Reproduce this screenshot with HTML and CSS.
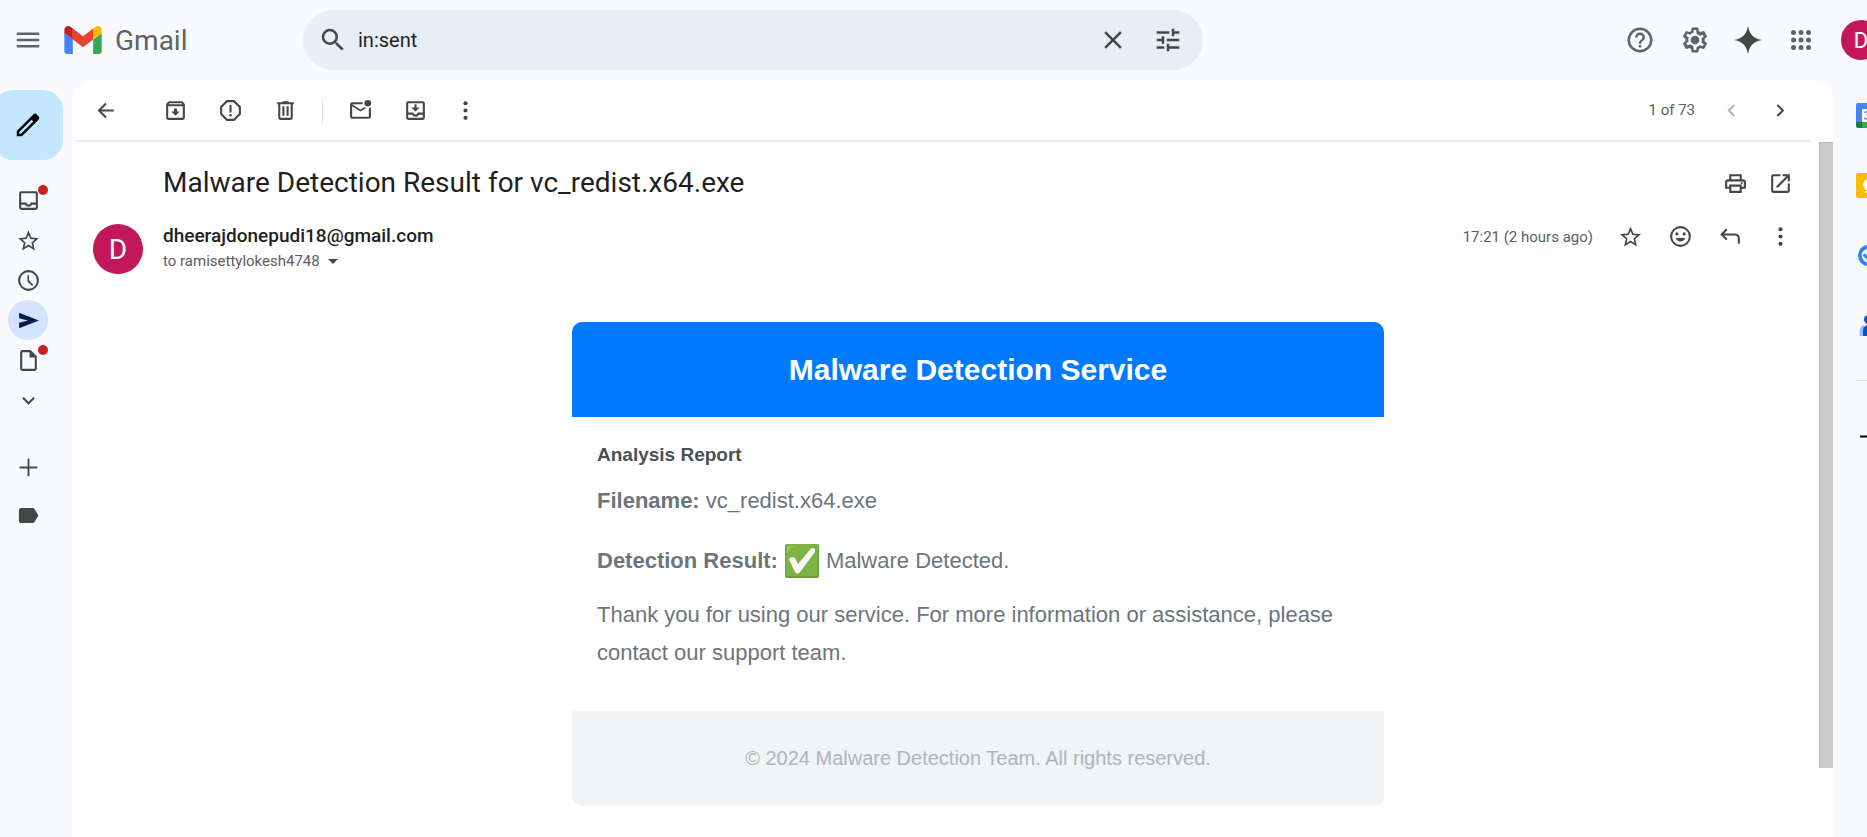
FILE: index.html
```html
<!DOCTYPE html>
<html lang="en">
<head>
<meta charset="utf-8">
<title>Malware Detection Result for vc_redist.x64.exe - Gmail</title>
<link rel="stylesheet" href="styles.css">
</head>
<body>
<header class="topbar">
  <button class="icon-btn soft" aria-label="Main menu"><svg class="icon-lg" viewBox="0 0 24 24"><path d="M3 18h18v-2H3zm0-5h18v-2H3zm0-7v2h18V6z"/></svg></button>
  <a class="brand" href="#" aria-label="Gmail home">
    <svg class="logo" viewBox="52 42 88 66">
      <path fill="#4285f4" d="M58 108h14V74L52 59v43c0 3.32 2.69 6 6 6"/>
      <path fill="#34a853" d="M120 108h14c3.32 0 6-2.69 6-6V59l-20 15"/>
      <path fill="#fbbc04" d="M120 48v26l20-15v-8c0-7.42-8.47-11.65-14.4-7.2"/>
      <path fill="#ea4335" d="M72 74V48l24 18 24-18v26L96 92"/>
      <path fill="#c5221f" d="M52 51v8l20 15V48l-5.6-4.2c-5.94-4.45-14.4-.22-14.4 7.2"/>
    </svg>
    <span>Gmail</span>
  </a>
  <form class="search">
    <button class="icon-btn" type="button" aria-label="Search"><svg class="icon-lg" viewBox="0 0 24 24"><path d="M15.5 14h-.79l-.28-.27A6.47 6.47 0 0 0 16 9.500 6.500 6.500 0 1 0 9.500 16c1.610 0 3.090-.59 4.230-1.570l.27.280v.79l5 4.990L20.490 19zm-6 0a4.500 4.500 0 1 1 0-9 4.500 4.500 0 0 1 0 9"/></svg></button>
    <input type="text" aria-label="Search mail" value="in:sent">
    <button class="icon-btn" type="button" aria-label="Clear search"><svg class="icon-lg" viewBox="0 0 24 24"><path d="M19 6.410 17.590 5 12 10.590 6.410 5 5 6.410 10.590 12 5 17.590 6.410 19 12 13.410 17.590 19 19 17.590 13.410 12z"/></svg></button>
    <button class="icon-btn" type="button" aria-label="Search options"><svg class="icon-lg" viewBox="0 0 24 24"><path d="M3 17v2h6v-2zM3 5v2h10V5zm10 16v-2h8v-2h-8v-2h-2v6zM7 9v2H3v2h4v2h2V9zm14 4v-2H11v2zm-6-4h2V7h4V5h-4V3h-2z"/></svg></button>
  </form>
  <nav class="top-actions" aria-label="Account tools">
    <button class="icon-btn soft help" aria-label="Support"><svg class="icon-lg" viewBox="0 0 24 24"><path d="M11 18h2v-2h-2zm1-16a10 10 0 1 0 0 20 10 10 0 0 0 0-20m0 18a8 8 0 1 1 0-16 8 8 0 0 1 0 16m0-14a4 4 0 0 0-4 4h2a2 2 0 1 1 4 0c0 2-3 1.750-3 5h2c0-2.250 3-2.500 3-5a4 4 0 0 0-4-4"/></svg></button>
    <button class="icon-btn soft" aria-label="Settings"><svg class="icon-lg" viewBox="0 0 24 24"><path d="M13.850 22h-3.700c-.48 0-.89-.35-.96-.84l-.27-1.890c-.53-.27-1.040-.56-1.530-.9l-1.800.73c-.45.17-.95-.02-1.180-.43l-1.830-3.200c-.24-.45-.14-.96.22-1.250l1.530-1.190c-.02-.34-.04-.67-.04-1.030s.02-.69.04-1.030L2.810 9.780a.96.960 0 0 1-.22-1.250l1.850-3.200c.22-.42.73-.61 1.160-.43l1.810.73c.5-.34 1-.64 1.510-.89l.27-1.910c.07-.47.480-.83.960-.83h3.700c.48 0 .89.350.96.840l.27 1.890c.53.270 1.040.56 1.530.9l1.800-.73c.46-.17.960.02 1.190.43l1.830 3.210c.24.440.14.960-.22 1.240l-1.530 1.190c.3.340.05.680.05 1.030s-.02.690-.05 1.030l1.520 1.190c.37.300.46.810.23 1.240l-1.860 3.220c-.22.410-.73.600-1.160.43l-1.820-.73c-.49.340-1 .64-1.510.89l-.27 1.910c-.7.470-.48.820-.96.820m-2.810-2h1.910l.35-2.270.44-.2c.58-.26 1.180-.61 1.780-1.050l.37-.27 2.130.86.970-1.670-1.830-1.430.06-.45c.04-.36.080-.71.080-1.090s-.03-.74-.08-1.090l-.06-.45 1.830-1.430-.97-1.670-2.130.86-.37-.29a9 9 0 0 0-1.770-1.030l-.44-.2L12.960 4h-1.910l-.35 2.270-.44.200c-.58.250-1.180.600-1.790 1.050l-.37.270-2.120-.85-.97 1.660 1.830 1.430-.06.450a8 8 0 0 0 0 2.180l.06.450-1.830 1.430.97 1.670 2.120-.86.380.290c.58.450 1.150.790 1.760 1.030l.45.200z"/><circle cx="12" cy="12" r="3.500"/></svg></button>
    <button class="icon-btn" aria-label="Try Gemini"><svg class="icon-lg" viewBox="0 0 24 24"><path d="M12 .5c.7 6.300 4.700 10.800 11.500 11.500-6.800.7-10.800 5.200-11.500 11.500C11.300 17.200 7.300 12.700.5 12 7.300 11.300 11.300 6.800 12 .5"/></svg></button>
    <button class="icon-btn soft" aria-label="Google apps"><svg class="icon-lg" viewBox="0 0 24 24"><g><circle cx="6" cy="6" r="2"/><circle cx="12" cy="6" r="2"/><circle cx="18" cy="6" r="2"/><circle cx="6" cy="12" r="2"/><circle cx="12" cy="12" r="2"/><circle cx="18" cy="12" r="2"/><circle cx="6" cy="18" r="2"/><circle cx="12" cy="18" r="2"/><circle cx="18" cy="18" r="2"/></g></svg></button>
    <button class="avatar avatar-sm" aria-label="Google Account">D</button>
  </nav>
</header>
<div class="workspace">
  <nav class="rail" aria-label="Mailboxes">
    <button class="compose" aria-label="Compose"><svg class="icon-lg" viewBox="0 0 24 24"><path d="M20.410 4.940 19.060 3.590a2 2 0 0 0-2.830 0L3 16.820V21h4.180L20.410 7.770a2 2 0 0 0 0-2.830M6.410 19.060 5 19v-1.360l9.820-9.820 1.410 1.410z"/></svg></button>
    <a class="box" href="#" aria-label="Inbox"><svg class="icon" viewBox="0 0 24 24"><path d="M19 3H5a2 2 0 0 0-2 2v14a2 2 0 0 0 2 2h14a2 2 0 0 0 2-2V5a2 2 0 0 0-2-2m0 16H5v-3h3.560a4 4 0 0 0 6.880 0H19zm0-5h-4.990a2 2 0 0 1-4 0H5V5h14z"/></svg><i class="dot"></i></a>
    <a class="box" href="#" aria-label="Starred"><svg class="icon" viewBox="0 0 24 24"><path d="m22 9.740-7.190-.62L12 2.500 9.190 9.130 2 9.740l5.460 4.730-1.640 7.030L12 17.770l6.180 3.730-1.630-7.030zM12 15.900l-3.760 2.270 1-4.280-3.320-2.880 4.380-.38L12 6.600l1.710 4.040 4.380.38-3.320 2.880 1 4.280z"/></svg></a>
    <a class="box" href="#" aria-label="Snoozed"><svg class="icon" viewBox="0 0 24 24"><path d="M12 2a10 10 0 1 0 0 20 10 10 0 0 0 0-20m0 18a8 8 0 1 1 0-16 8 8 0 0 1 0 16m.5-13H11v6l4.500 4.200 1.200-1.200-4.200-4z"/></svg></a>
    <a class="box box-active" href="#" aria-label="Sent"><svg class="icon" viewBox="0 0 24 24"><path d="M3 4.500 22 12 3 19.500v-5.300L11.500 12 3 9.800z"/></svg></a>
    <a class="box" href="#" aria-label="Drafts"><svg class="icon" viewBox="0 0 24 24"><path d="M14 2H6a2 2 0 0 0-2 2v16a2 2 0 0 0 2 2h12a2 2 0 0 0 2-2V8zm4 18H6V4h7v5h5z"/></svg><i class="dot"></i></a>
    <button class="box" aria-label="More"><svg class="icon" viewBox="0 0 24 24"><path d="M16.590 8.590 12 13.170 7.410 8.590 6 10l6 6 6-6z"/></svg></button>
    <div class="labels">
      <button class="box box-tall" aria-label="Create new label"><svg class="icon" viewBox="0 0 24 24"><path d="M20.500 12.900h-7.600v7.600h-1.800v-7.600H3.500v-1.800h7.600V3.500h1.800v7.600h7.600z"/></svg></button>
      <a class="box box-tall" href="#" aria-label="Label"><svg class="icon" viewBox="0 0 24 24"><path d="M17.600 5.500c-.36-.5-.9-.8-1.500-.8H5a2.200 2.200 0 0 0-2.200 2v10.600c0 1.100.9 2 2.200 2h11.100c.6 0 1.140-.3 1.500-.8L21.500 12z"/></svg></a>
    </div>
  </nav>
  <main class="panel">
    <div class="toolbar" role="toolbar" aria-label="Message actions">
      <button class="icon-btn back" aria-label="Back to Sent"><svg class="icon" viewBox="0 0 24 24"><path class="line" d="M11.500 5.200 4.800 12l6.700 6.800M4.800 12H19"/></svg></button>
      <div class="group">
        <button class="icon-btn" aria-label="Archive"><svg class="icon" viewBox="0 0 24 24"><path d="m20.540 5.230-1.390-1.680C18.880 3.210 18.470 3 18 3H6c-.47 0-.88.21-1.160.55L3.460 5.230C3.170 5.570 3 6.020 3 6.500V19a2 2 0 0 0 2 2h14a2 2 0 0 0 2-2V6.500c0-.48-.17-.93-.46-1.270M6.240 5h11.520l.83 1H5.420zM5 19V8h14v11zm8.450-9h-2.900v3H8l4 4 4-4h-2.550z"/></svg></button>
        <button class="icon-btn" aria-label="Report spam"><svg class="icon" viewBox="0 0 24 24"><path d="M15.730 2H8.270L2 8.270v7.460L8.270 22h7.460L22 15.730V8.270zM20 14.900 14.900 20H9.100L4 14.900V9.100L9.100 4h5.800L20 9.100zM11 6.500h2V14h-2z"/><circle cx="12" cy="16.500" r="1.200"/></svg></button>
        <button class="icon-btn" aria-label="Delete"><svg class="icon" viewBox="0 0 24 24"><path d="M15 4V3H9v1H4v2h1v13a2 2 0 0 0 2 2h10a2 2 0 0 0 2-2V6h1V4zm2 15H7V6h10zM9 8h2v9H9zm4 0h2v9h-2z"/></svg></button>
      </div>
      <span class="divider"></span>
      <div class="group">
        <button class="icon-btn" aria-label="Mark as unread"><svg class="icon" viewBox="0 0 24 24"><path d="M22 8.980V18a2 2 0 0 1-2 2H4a2 2 0 0 1-2-2V6a2 2 0 0 1 2-2h10.100a5 5 0 0 0 0 2H4l8 5 3.670-2.290c.47.430 1.020.76 1.630.98L12 13 4 8v10h16V9.900a5 5 0 0 0 2-.92"/><circle cx="19" cy="5" r="3.200"/></svg></button>
        <button class="icon-btn" aria-label="Move to"><svg class="icon" viewBox="0 0 24 24"><path d="M19 3H5a2 2 0 0 0-2 2v14a2 2 0 0 0 2 2h14a2 2 0 0 0 2-2V5a2 2 0 0 0-2-2m0 16H5v-3h3.560a4 4 0 0 0 6.880 0H19zm0-5h-4.990a2 2 0 0 1-4 0H5V5h14zm-3-5h-3V6h-2v3H8l4 4z"/></svg></button>
      </div>
      <button class="icon-btn more" aria-label="More"><svg class="icon" viewBox="0 0 24 24"><circle cx="12" cy="5" r="2"/><circle cx="12" cy="12" r="2"/><circle cx="12" cy="19" r="2"/></svg></button>
      <div class="pager">
        <span>1 of 73</span>
        <button class="icon-btn" aria-label="Newer" disabled><svg class="icon" viewBox="0 0 24 24"><path d="M15.410 7.410 14 6l-6 6 6 6 1.410-1.410L10.830 12z"/></svg></button>
        <button class="icon-btn" aria-label="Older"><svg class="icon" viewBox="0 0 24 24"><path d="M9.700 6 8.290 7.410 12.880 12l-4.590 4.590L9.700 18l6-6z"/></svg></button>
      </div>
    </div>
    <div class="reader">
      <article class="message">
        <div class="subject-row">
          <h1>Malware Detection Result for vc_redist.x64.exe</h1>
          <div class="subject-actions">
            <button class="icon-btn" aria-label="Print"><svg class="icon" viewBox="0 0 24 24"><path d="M19 8h-1V3H6v5H5a3 3 0 0 0-3 3v6h4v4h12v-4h4v-6a3 3 0 0 0-3-3M8 5h8v3H8zm8 14H8v-4h8zm2-4v-2H6v2H4v-4a1 1 0 0 1 1-1h14a1 1 0 0 1 1 1v4z"/><circle cx="18" cy="11.500" r="1"/></svg></button>
            <button class="icon-btn" aria-label="Open in new window"><svg class="icon" viewBox="0 0 24 24"><path d="M19 19H5V5h7V3H5a2 2 0 0 0-2 2v14a2 2 0 0 0 2 2h14a2 2 0 0 0 2-2v-7h-2zM14 3v2h3.590l-9.830 9.830 1.410 1.410L19 6.410V10h2V3z"/></svg></button>
          </div>
        </div>
        <div class="sender-row">
          <span class="avatar">D</span>
          <div class="sender">
            <strong>dheerajdonepudi18@gmail.com</strong>
            <button class="recipient">to ramisettylokesh4748 <i class="caret"></i></button>
          </div>
          <div class="sender-actions">
            <time>17:21 (2 hours ago)</time>
            <button class="icon-btn" aria-label="Star"><svg class="icon" viewBox="0 0 24 24"><path d="m22 9.740-7.190-.62L12 2.500 9.190 9.130 2 9.740l5.460 4.730-1.640 7.030L12 17.770l6.180 3.730-1.630-7.030zM12 15.900l-3.760 2.270 1-4.280-3.320-2.880 4.380-.38L12 6.600l1.710 4.040 4.380.38-3.320 2.880 1 4.280z"/></svg></button>
            <button class="icon-btn" aria-label="Add reaction"><svg class="icon" viewBox="0 0 24 24"><path d="M12 2a10 10 0 1 0 0 20 10 10 0 0 0 0-20m0 18a8 8 0 1 1 0-16 8 8 0 0 1 0 16M7.500 13.500h9a4.700 4.700 0 0 1-9 0"/><circle cx="8.500" cy="9.500" r="1.500"/><circle cx="15.500" cy="9.500" r="1.500"/></svg></button>
            <button class="icon-btn" aria-label="Reply"><svg class="icon" viewBox="0 0 24 24"><path class="line" d="M8.500 5 3.500 10l5 5M3.500 10H16q4 0 4 4v5"/></svg></button>
            <button class="icon-btn" aria-label="More"><svg class="icon" viewBox="0 0 24 24"><circle cx="12" cy="5" r="2"/><circle cx="12" cy="12" r="2"/><circle cx="12" cy="19" r="2"/></svg></button>
          </div>
        </div>
        <section class="card">
          <h2>Malware Detection Service</h2>
          <div class="card-body">
            <h3>Analysis Report</h3>
            <p><b>Filename:</b> vc_redist.x64.exe</p>
            <p class="result"><b>Detection Result:</b>
              <svg class="check" viewBox="0 0 34 34" role="img" aria-label="Check mark"><rect width="34" height="34" rx="2" fill="#689f38"/><rect x="1" width="32" height="32" rx="2" fill="#7cb342"/><path fill="#aed581" opacity=".7" d="M2 9V5q0-3 3-3h5q-6 1-8 7"/><path fill="#fafafa" d="M4 15.500q2.500-4 6-1.500l3 6L25.500 5q2-2 4.500 0v3L15 28q-3 3-5 0z"/></svg>
              Malware Detected.</p>
            <p>Thank you for using our service. For more information or assistance, please contact our support team.</p>
          </div>
          <footer>© 2024 Malware Detection Team. All rights reserved.</footer>
        </section>
      </article>
      <div class="scrollbar"><div class="thumb"></div></div>
    </div>
  </main>
  <aside class="side" aria-label="Side panel">
    <a class="app" href="#" aria-label="Calendar"><svg class="icon" viewBox="0 0 25 25"><path fill="#4285f4" d="M2 0h21q2 0 2 2v17H0V2q0-2 2-2"/><path fill="#188038" d="M0 19h6v6H2q-2 0-2-2z"/><path fill="#34a853" d="M6 19h13v6H6z"/><path fill="#fff" d="M6 6h13v13H6z"/><path d="M8.500 10q1-1.500 2.500-1.200t1.500 1.700q-.2 1.500-2 1.500 2.500.2 2.200 2.200-.4 1.800-2.200 1.800-1.700 0-2.200-1.500" fill="none" stroke="#4285f4" stroke-width="1.300"/></svg></a>
    <a class="app" href="#" aria-label="Keep"><svg class="icon" viewBox="0 0 25 25"><rect width="25" height="25" rx="2" fill="#fbbc04"/><path fill="#fff" d="M12.500 6a5.500 5.500 0 0 0-3 10v1h6v-1a5.500 5.500 0 0 0-3-10M9.500 18h6v2h-6z"/></svg></a>
    <a class="app" href="#" aria-label="Tasks"><svg class="icon" viewBox="0 0 25 25"><circle cx="12.500" cy="12.500" r="8.700" fill="none" stroke="#2684fc" stroke-width="3.600"/><path fill="#2684fc" d="m6.500 12.500 2.300-2.300 3 3 7-7 2 2-9 9z"/></svg></a>
    <a class="app" href="#" aria-label="Contacts"><svg class="icon" viewBox="0 0 25 25"><circle cx="12.500" cy="6.500" r="4.500" fill="#0057cc"/><path fill="#91bfff" d="M8 12q-4.500 1-4.500 7v4h5V12z"/><path fill="#0057cc" d="M7 23v-5q0-6 6-6t8 6v5z"/></svg></a>
    <hr>
    <button class="app" aria-label="Get add-ons"><svg class="icon" viewBox="0 0 24 24"><path d="M20 13h-7v7h-2v-7H4v-2h7V4h2v7h7z"/></svg></button>
  </aside>
</div>
</body>
</html>
```
FILE: styles.css
```css
* { box-sizing: border-box; }
body {
  margin: 0;
  height: 100vh;
  display: flex;
  flex-direction: column;
  overflow: hidden;
  background: #f8fafd;
  color: #1f1f1f;
  font-family: Roboto, Arial, sans-serif;
}
button, input { font: inherit; color: inherit; border: 0; padding: 0; background: none; }
button { cursor: pointer; }
a { color: inherit; text-decoration: none; }
h1, h2, h3, p { margin: 0; }
svg { display: block; fill: currentColor; flex: none; }
.icon { width: 25px; height: 25px; }
.icon-lg { width: 30px; height: 30px; }
.line { fill: none; stroke: currentColor; stroke-width: 2; }
.icon-btn { display: flex; flex: none; color: #444746; }
.soft { color: #5f6368; }

.topbar { display: flex; align-items: center; flex: none; height: 80px; padding-left: 13px; }
.brand { display: flex; align-items: center; gap: 13px; width: 239px; margin-left: 21px; color: #5f6368; font-size: 28px; }
.logo { width: 38px; height: 28px; }
.search { display: flex; align-items: center; flex: 0 1 900px; height: 60px; padding: 0 20px 0 15px; border-radius: 30px; background: #e9eef6; margin-right: auto; }
.search input { flex: 1; min-width: 0; margin-left: 10px; outline: 0; font-size: 20px; color: #1f1f1f; }
.search input + .icon-btn { margin-right: 25px; }
.top-actions { display: flex; align-items: center; gap: 23px; margin-right: -14px; }
.top-actions .avatar { margin-left: 2px; }
.help { margin-right: 2px; }
.avatar { display: grid; place-items: center; flex: none; width: 50px; height: 50px; border-radius: 50%; background: #c2185b; color: #fff; font-size: 28px; }
.avatar-sm { width: 40px; height: 40px; font-size: 22px; }

.workspace { display: flex; flex: 1; min-height: 0; }
.rail { display: flex; flex-direction: column; flex: none; width: 73px; padding: 10px 0 0 8px; color: #444746; }
.compose { display: flex; align-items: center; justify-content: flex-end; width: 70px; height: 70px; margin: 0 0 20px -15px; padding-right: 20px; border-radius: 20px; background: #c2e7ff; color: #000; }
.box { position: relative; display: grid; place-items: center; width: 40px; height: 40px; border-radius: 50%; }
.box-active { background: #d3e3fd; color: #001d4a; }
.box-tall { height: 48px; }
.labels { margin-top: 23px; }
.dot { position: absolute; top: 5px; right: 0; width: 10px; height: 10px; border-radius: 50%; background: #c5221f; }

.panel { display: flex; flex-direction: column; flex: 1; min-width: 0; overflow: hidden; border-radius: 20px 20px 0 0; background: #fff; }
.toolbar { display: flex; align-items: center; flex: none; height: 62px; margin: 0 23px 0 2px; padding: 0 17px 0 19px; border-bottom: 2px solid #ebebeb; }
.group { display: flex; gap: 30px; }
.back { margin-right: 44px; }
.divider { width: 1px; height: 25px; margin: 0 25px 0 24px; background: #dfe3ea; }
.more { margin-left: 25px; }
.pager { display: flex; align-items: center; gap: 24px; margin-left: auto; color: #5e5e5e; font-size: 15px; }
.pager .icon-btn:disabled { color: #b4b5b5; }

.reader { display: flex; flex: 1; min-height: 0; }
.message { flex: 1; min-width: 0; padding: 0 26px 0 20px; }
.scrollbar { flex: none; width: 14px; }
.thumb { height: 90%; background: #cbcbcb; border: 1px solid #bdbdbd; border-width: 1px 0 0 1px; }
.subject-row { display: flex; align-items: center; justify-content: space-between; height: 82px; padding-left: 70px; }
h1 { font-size: 28px; font-weight: 400; line-height: 36px; }
.subject-actions { display: flex; gap: 20px; }
.sender-row { display: flex; align-items: flex-start; }
.sender { display: flex; flex-direction: column; align-items: flex-start; flex: 1; margin-left: 20px; }
.sender strong { font-size: 19px; line-height: 24px; font-weight: 500; }
.recipient { display: flex; align-items: center; gap: 8px; margin-top: 1px; color: #5e5e5e; font-size: 15px; line-height: 24px; }
.caret { border: 5px solid transparent; border-top-color: #444746; border-bottom: 0; }
.sender-actions { display: flex; align-items: center; gap: 25px; color: #5e5e5e; font-size: 15px; }

.card { max-width: 812px; margin: 48px auto 0; margin-left: max(70px, calc((100% + 70px - 812px) / 2)); border-radius: 10px; overflow: hidden; font-family: "Liberation Sans", Arial, sans-serif; color: #6c757d; }
.card h2 { padding: 25px; background: #007bff; color: #fff; font-size: 30px; line-height: 45px; text-align: center; }
.card-body { padding: 24px 25px 39px; font-size: 22px; line-height: 38px; }
.card h3 { margin-bottom: 13px; color: #495057; font-size: 19px; line-height: 28px; }
.card-body p + p { margin-top: 16px; }
.card-body p + .result { margin-top: 22px; }
.result { display: flex; align-items: center; gap: 7px; }
.check { width: 34px; height: 34px; }
.card footer { padding: 32px 25px; background: #f1f3f5; color: #adb5bd; font-size: 20px; line-height: 31px; text-align: center; }

.side { flex: none; width: 70px; margin-right: -36px; color: #000; }
.app { display: grid; place-items: center; width: 100%; height: 70px; }
.side hr { width: 25px; height: 1px; margin: 20px auto; border: 0; background: #dadce0; }
```
